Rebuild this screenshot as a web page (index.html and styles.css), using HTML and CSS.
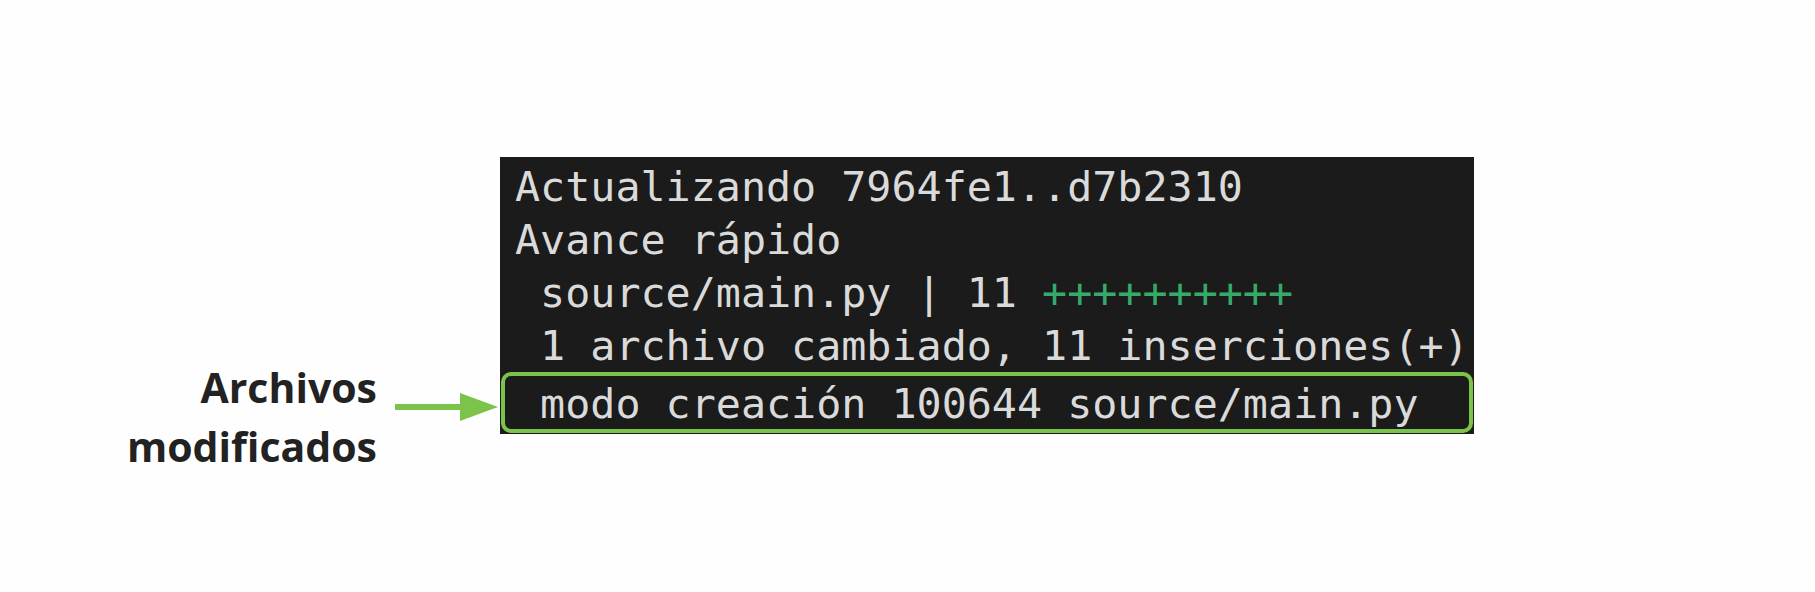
FILE: index.html
```html
<!DOCTYPE html>
<html lang="es">
<head>
<meta charset="utf-8">
<title>Archivos modificados</title>
<link rel="stylesheet" href="styles.css">
</head>
<body>
<div class="scene">
  <div class="label">Archivos<br>modificados</div>
  <svg class="arrow" width="123" height="40" viewBox="0 0 123 40">
    <line x1="18" y1="20" x2="90" y2="20" stroke="#7cc34b" stroke-width="6"/>
    <polygon points="83,6 121,20 83,34" fill="#7cc34b"/>
  </svg>
  <div class="terminal">
    <div class="lines">
      <div class="line">Actualizando 7964fe1..d7b2310</div>
      <div class="line">Avance rápido</div>
      <div class="line"> source/main.py | 11 <span class="plus">++++++++++</span></div>
      <div class="line"> 1 archivo cambiado, 11 inserciones(+)</div>
    </div>
    <div class="highlight"> modo creación 100644 source/main.py</div>
  </div>
</div>
</body>
</html>
```
FILE: styles.css
```css
html, body {
  margin: 0;
  padding: 0;
  background: #fefefe;
}
body {
  width: 1815px;
  height: 592px;
  overflow: hidden;
}
.scene {
  display: flex;
  align-items: flex-start;
  padding-top: 157px;
  padding-left: 117px;
}
.label {
  width: 260px;
  margin-top: 201px;
  text-align: right;
  font-family: "Open Sans", "Noto Sans", sans-serif;
  font-weight: 700;
  font-size: 41px;
  line-height: 59px;
  color: #222222;
}
.arrow {
  display: block;
  flex: none;
  margin-top: 230px;
}
.terminal {
  width: 974px;
  height: 277px;
  background: #1b1b1b;
  font-family: "DejaVu Sans Mono", "Liberation Mono", monospace;
  font-size: 41.7px;
  color: #dadada;
  display: flex;
  flex-direction: column;
}
.lines {
  padding-top: 3px;
  padding-left: 15px;
  height: 212px;
}
.line {
  line-height: 53px;
  white-space: pre;
}
.plus {
  color: #35aa6b;
}
.highlight {
  margin-left: 1px;
  margin-right: 1px;
  border: 4px solid #7cc34b;
  border-radius: 10px;
  padding: 3px 0 0 10px;
  line-height: 50px;
  height: 50px;
  white-space: pre;
}
```
